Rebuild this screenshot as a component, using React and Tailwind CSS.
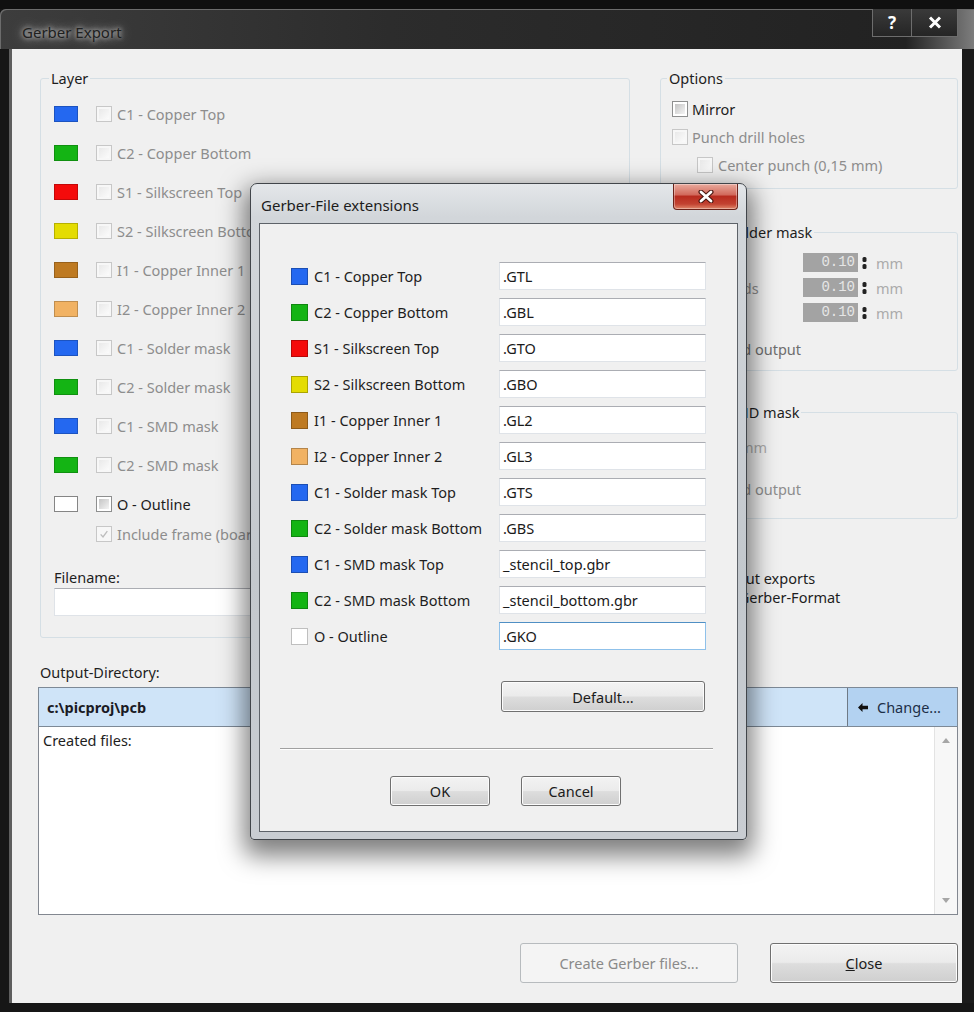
import React from "react";

// layer list of the export window
const boardLayers = [
  { name: "C1 - Copper Top", swatch: "bg-[#2468f0]" },
  { name: "C2 - Copper Bottom", swatch: "bg-[#14b414]" },
  { name: "S1 - Silkscreen Top", swatch: "bg-[#f40b0b]" },
  { name: "S2 - Silkscreen Bottom", swatch: "bg-[#e4dc02]" },
  { name: "I1 - Copper Inner 1", swatch: "bg-[#be7a22]" },
  { name: "I2 - Copper Inner 2", swatch: "bg-[#f1b263]" },
  { name: "C1 - Solder mask", swatch: "bg-[#2468f0]" },
  { name: "C2 - Solder mask", swatch: "bg-[#14b414]" },
  { name: "C1 - SMD mask", swatch: "bg-[#2468f0]" },
  { name: "C2 - SMD mask", swatch: "bg-[#14b414]" },
];

// file extensions per layer
const extensions = [
  { name: "C1 - Copper Top", swatch: "bg-[#2468f0]", ext: ".GTL" },
  { name: "C2 - Copper Bottom", swatch: "bg-[#14b414]", ext: ".GBL" },
  { name: "S1 - Silkscreen Top", swatch: "bg-[#f40b0b]", ext: ".GTO" },
  { name: "S2 - Silkscreen Bottom", swatch: "bg-[#e4dc02]", ext: ".GBO" },
  { name: "I1 - Copper Inner 1", swatch: "bg-[#be7a22]", ext: ".GL2" },
  { name: "I2 - Copper Inner 2", swatch: "bg-[#f1b263]", ext: ".GL3" },
  { name: "C1 - Solder mask Top", swatch: "bg-[#2468f0]", ext: ".GTS" },
  { name: "C2 - Solder mask Bottom", swatch: "bg-[#14b414]", ext: ".GBS" },
  { name: "C1 - SMD mask Top", swatch: "bg-[#2468f0]", ext: "_stencil_top.gbr" },
  { name: "C2 - SMD mask Bottom", swatch: "bg-[#14b414]", ext: "_stencil_bottom.gbr" },
  { name: "O - Outline", swatch: "bg-white", ext: ".GKO", focused: true },
];

const Check = ({ disabled = false, checked = false }) => (
  <span
    className={`flex h-[16px] w-[16px] shrink-0 items-center justify-center border p-[2px] ${
      disabled ? "border-[#c7c7c7] bg-[#f7f7f7]" : "border-[#8e8f8f] bg-white"
    }`}
  >
    {checked ? (
      <svg width="12" height="12" viewBox="0 0 12 12">
        <path d="M2 6.5 L4.8 9.5 L10 2.5" fill="none" stroke="#bdbdbd" strokeWidth="1.6" />
      </svg>
    ) : (
      <span
        className={`h-full w-full ${
          disabled
            ? "bg-[linear-gradient(135deg,#e9e9e9,#fbfbfb)]"
            : "bg-[linear-gradient(135deg,#c4c4c4,#f4f4f4)]"
        }`}
      />
    )}
  </span>
);

const Spinner = () => (
  <svg width="5" height="12" viewBox="0 0 5 12" className="ml-[4px]">
    <rect x="0.5" y="0" width="4" height="5" rx="1.5" fill="#222" />
    <rect x="0.5" y="7" width="4" height="5" rx="1.5" fill="#222" />
  </svg>
);

const WinButton = ({ children, className = "", disabled = false }) => (
  <div
    className={`flex items-center justify-center rounded-[3px] border ${
      disabled
        ? "border-[#b7bbbe] bg-[#f4f4f4] text-[#8a8a8a]"
        : "border-[#707070] bg-[linear-gradient(#f3f3f3,#ebebeb_48%,#dddddd_52%,#cfcfcf)] text-[#1b1b1b] shadow-[inset_0_0_0_1px_#fcfcfc]"
    } ${className}`}
  >
    {children}
  </div>
);

const TextBox = ({ children, className = "", focused = false }) => (
  <div
    className={`border bg-white pl-[3px] text-[#1a1a1a] ${
      focused
        ? "border-[#8fc1ea] border-t-[#4f8fc4]"
        : "border-[#dfe3e8] border-t-[#abadb3]"
    } ${className}`}
  >
    {children}
  </div>
);

const SolderRow = ({ label }) => (
  <div className="flex h-[25px] items-center">
    <span className="w-[131px] text-[#8d8d8d]">{label}</span>
    <span className="h-[19px] w-[55px] bg-[#a3a3a3] pr-[3px] text-right font-['Liberation_Mono',monospace] text-[14px] leading-[19px] text-[#e6e6e6]">
      0.10
    </span>
    <Spinner />
    <span className="ml-[9px] text-[#ababab]">mm</span>
  </div>
);

function ExtensionsDialog() {
  return (
    <div className="absolute left-[250px] top-[183px] flex h-[657px] w-[497px] flex-col rounded-t-[7px] rounded-b-[4px] border border-[#41454a] bg-[linear-gradient(#e4e7ea,#d2d6da_5%,#c3c8cd_60%,#c9cdd2)] shadow-[0_10px_24px_6px_rgba(0,0,0,0.5)]">
      <div className="flex h-[39px] items-start">
        <span className="ml-[10px] mt-[11px] text-[15px] leading-[20px] text-[#1c1c1c]">
          Gerber-File extensions
        </span>
        <div className="ml-auto mr-[8px] flex h-[26px] w-[65px] items-center justify-center rounded-b-[4px] border border-t-0 border-[#6b2219] bg-[linear-gradient(#e9aa9d,#d26b5d_42%,#b82c1f_50%,#c24231_80%,#e0876a)] shadow-[inset_0_0_0_1px_rgba(255,255,255,0.35)]">
          <svg width="16" height="13" viewBox="0 0 16 13">
            <path d="M3 2 L13 11 M13 2 L3 11" stroke="#4a1710" strokeWidth="5" strokeLinecap="round" />
            <path d="M3 2 L13 11 M13 2 L3 11" stroke="#fff" strokeWidth="2.8" strokeLinecap="round" />
          </svg>
        </div>
      </div>

      <div className="mx-[8px] flex h-[609px] flex-col border border-[#5d6268] bg-[#f0f0f0] pt-[34px]">
        {extensions.map((row) => (
          <div key={row.name} className="ml-[31px] flex h-[36px] items-center">
            <span className={`h-[17px] w-[17px] shrink-0 border border-black/25 ${row.swatch}`} />
            <span className="ml-[6px] w-[185px] text-[#1e1e1e]">{row.name}</span>
            <TextBox focused={row.focused} className="h-[28px] w-[207px] leading-[26px]">
              {row.ext}
            </TextBox>
          </div>
        ))}

        <WinButton className="ml-[241px] mt-[27px] h-[31px] w-[204px]">Default...</WinButton>

        <div className="ml-[20px] mt-[36px] h-[2px] w-[433px] border-t border-b border-t-[#a0a0a0] border-b-white" />

        <div className="ml-[130px] mt-[26px] flex gap-[31px]">
          <WinButton className="h-[30px] w-[100px]">OK</WinButton>
          <WinButton className="h-[30px] w-[100px]">Cancel</WinButton>
        </div>
      </div>
    </div>
  );
}

export default function App() {
  return (
    <div className="relative flex h-[1012px] w-[974px] flex-col overflow-hidden bg-[#161616] font-['Noto_Sans',sans-serif] text-[14.5px] leading-[18px]">
      <div className="h-[9px] bg-[#101010]" />

      {/* title bar */}
      <div className="flex h-[40px] items-start rounded-tl-[6px] bg-[linear-gradient(90deg,#3d3d3d,#2c2c2c_40%,#222_93%,#7d7d7d)] shadow-[inset_1px_1px_0_#6c6c6c]">
        <span className="ml-[22px] mt-[13px] text-[15px] leading-[20px] text-[#202020] [text-shadow:0_0_4px_#c8c8c8,0_0_8px_#b0b0b0,0_0_14px_#8a8a8a]">
          Gerber Export
        </span>
        <div className="ml-auto mr-[16px] flex">
          <div className="flex h-[28px] w-[40px] items-center justify-center border border-t-0 border-[#6d6d6d] bg-[linear-gradient(#3a3a3a,#252525)] text-[17px] font-bold text-white">
            ?
          </div>
          <div className="flex h-[28px] w-[46px] items-center justify-center border border-l-0 border-t-0 border-[#6d6d6d] bg-[linear-gradient(#3a3a3a,#252525)]">
            <svg width="14" height="13" viewBox="0 0 14 13">
              <path d="M2 1.5 L12 11.5 M12 1.5 L2 11.5" stroke="#fff" strokeWidth="3" />
            </svg>
          </div>
        </div>
      </div>

      <div className="flex">
        <div className="w-[12px] shadow-[inset_-3px_0_0_#5e5e5e]" />

        {/* client area */}
        <div className="flex h-[954px] w-[950px] flex-col bg-[#f0f0f0] pb-[20px] pl-[26px] pr-[4px] pt-[20px]">
          <div className="flex items-start gap-[30px] pl-[2px]">
            <fieldset className="w-[590px] rounded-[3px] border border-[#d5dfe5]">
              <legend className="ml-[8px] px-[2px] text-[#1e1e1e]">Layer</legend>
              <div className="flex flex-col pb-[21px] pl-[13px] pt-[7px]">
                {boardLayers.map((l) => (
                  <div key={l.name + l.swatch} className="flex h-[39px] items-center">
                    <span className={`h-[16px] w-[24px] shrink-0 border border-black/20 ${l.swatch}`} />
                    <span className="ml-[18px]">
                      <Check disabled />
                    </span>
                    <span className="ml-[5px] text-[#8d8d8d]">{l.name}</span>
                  </div>
                ))}
                <div className="flex h-[39px] items-center">
                  <span className="h-[16px] w-[24px] shrink-0 border border-[#858585] bg-white" />
                  <span className="ml-[18px]">
                    <Check />
                  </span>
                  <span className="ml-[5px] text-[#1e1e1e]">O - Outline</span>
                </div>
                <div className="flex h-[21px] items-center pl-[42px]">
                  <Check disabled checked />
                  <span className="ml-[5px] text-[#8d8d8d]">Include frame (board outline)</span>
                </div>
                <span className="mt-[24px] text-[#1e1e1e]">Filename:</span>
                <TextBox className="mt-[2px] h-[28px] w-[562px]" />
              </div>
            </fieldset>

            <div className="flex w-[298px] flex-col">
              <fieldset className="rounded-[3px] border border-[#d5dfe5]">
                <legend className="ml-[6px] px-[2px] text-[#1e1e1e]">Options</legend>
                <div className="flex flex-col pb-[9px] pl-[11px] pt-[8px]">
                  <div className="flex h-[28px] items-center">
                    <Check />
                    <span className="ml-[4px] text-[#1e1e1e]">Mirror</span>
                  </div>
                  <div className="flex h-[28px] items-center">
                    <Check disabled />
                    <span className="ml-[4px] text-[#8d8d8d]">Punch drill holes</span>
                  </div>
                  <div className="flex h-[28px] items-center pl-[25px]">
                    <Check disabled />
                    <span className="ml-[5px] text-[#8d8d8d]">Center punch (0,15 mm)</span>
                  </div>
                </div>
              </fieldset>

              <fieldset className="mt-[34px] rounded-[3px] border border-[#d5dfe5]">
                <legend className="ml-[11px] px-[2px] text-[#1e1e1e]">Enlarge solder mask</legend>
                <div className="flex flex-col pb-[7px] pl-[11px] pt-[9px]">
                  <SolderRow label="Tracks" />
                  <SolderRow label="Copper pads" />
                  <SolderRow label="Vias" />
                  <div className="mt-[10px] flex h-[28px] items-center">
                    <Check disabled />
                    <span className="ml-[10px] text-[#6e6e6e]">Merged output</span>
                  </div>
                </div>
              </fieldset>

              <fieldset className="mt-[32px] rounded-[3px] border border-[#d5dfe5]">
                <legend className="ml-[9px] px-[2px] text-[#1e1e1e]">Enlarge SMD mask</legend>
                <div className="flex flex-col pb-[15px] pl-[11px] pt-[13px]">
                  <div className="flex h-[25px] items-center">
                    <span className="h-[19px] w-[55px] bg-[#a3a3a3]" />
                    <Spinner />
                    <span className="ml-[4px] text-[#ababab]">mm</span>
                  </div>
                  <div className="mt-[16px] flex h-[28px] items-center">
                    <Check disabled />
                    <span className="ml-[10px] text-[#8d8d8d]">Merged output</span>
                  </div>
                </div>
              </fieldset>

              <div className="mt-[50px] flex flex-col leading-[19px] text-[#1e1e1e]">
                <span className="ml-[13px]">Note: Layout exports</span>
                <span className="ml-[1px]">as RS-274X Gerber-Format</span>
              </div>
            </div>
          </div>

          <span className="ml-[2px] mt-[25px] text-[#1e1e1e]">Output-Directory:</span>

          <div className="mt-[6px] flex h-[40px] border border-[#7d8996] bg-[#cfe4f8]">
            <div className="flex flex-1 items-center pl-[8px] font-bold text-[#1a1a24]">c:\picproj\pcb</div>
            <div className="flex w-[110px] items-center border-l border-[#6f7a86] bg-[#b3d2f1] pl-[10px] text-[#1d2f48]">
              <svg width="10" height="9" viewBox="0 0 10 9">
                <path d="M0 4.5 L4.5 0 L4.5 2.8 L10 2.8 L10 6.2 L4.5 6.2 L4.5 9 Z" fill="#111" />
              </svg>
              <span className="ml-[9px]">Change...</span>
            </div>
          </div>

          <div className="flex h-[188px] border border-t-0 border-[#828790] bg-white">
            <div className="flex-1 pl-[4px] pt-[4px] text-[#1e1e1e]">Created files:</div>
            <div className="flex w-[23px] flex-col items-center justify-between border-l border-[#e3e3e3] bg-[#f7f7f7] py-[11px]">
              <svg width="8" height="5" viewBox="0 0 8 5">
                <path d="M0 5 L4 0 L8 5 Z" fill="#a6a6a6" />
              </svg>
              <svg width="8" height="5" viewBox="0 0 8 5">
                <path d="M0 0 L4 5 L8 0 Z" fill="#a6a6a6" />
              </svg>
            </div>
          </div>

          <div className="mt-[28px] flex justify-end gap-[32px]">
            <WinButton disabled className="h-[40px] w-[218px]">
              Create Gerber files...
            </WinButton>
            <WinButton className="h-[40px] w-[188px]">
              <span>
                <span className="underline">C</span>lose
              </span>
            </WinButton>
          </div>
        </div>

        <div className="flex-1 bg-[#1b1b1b]" />
      </div>

      <ExtensionsDialog />
    </div>
  );
}
